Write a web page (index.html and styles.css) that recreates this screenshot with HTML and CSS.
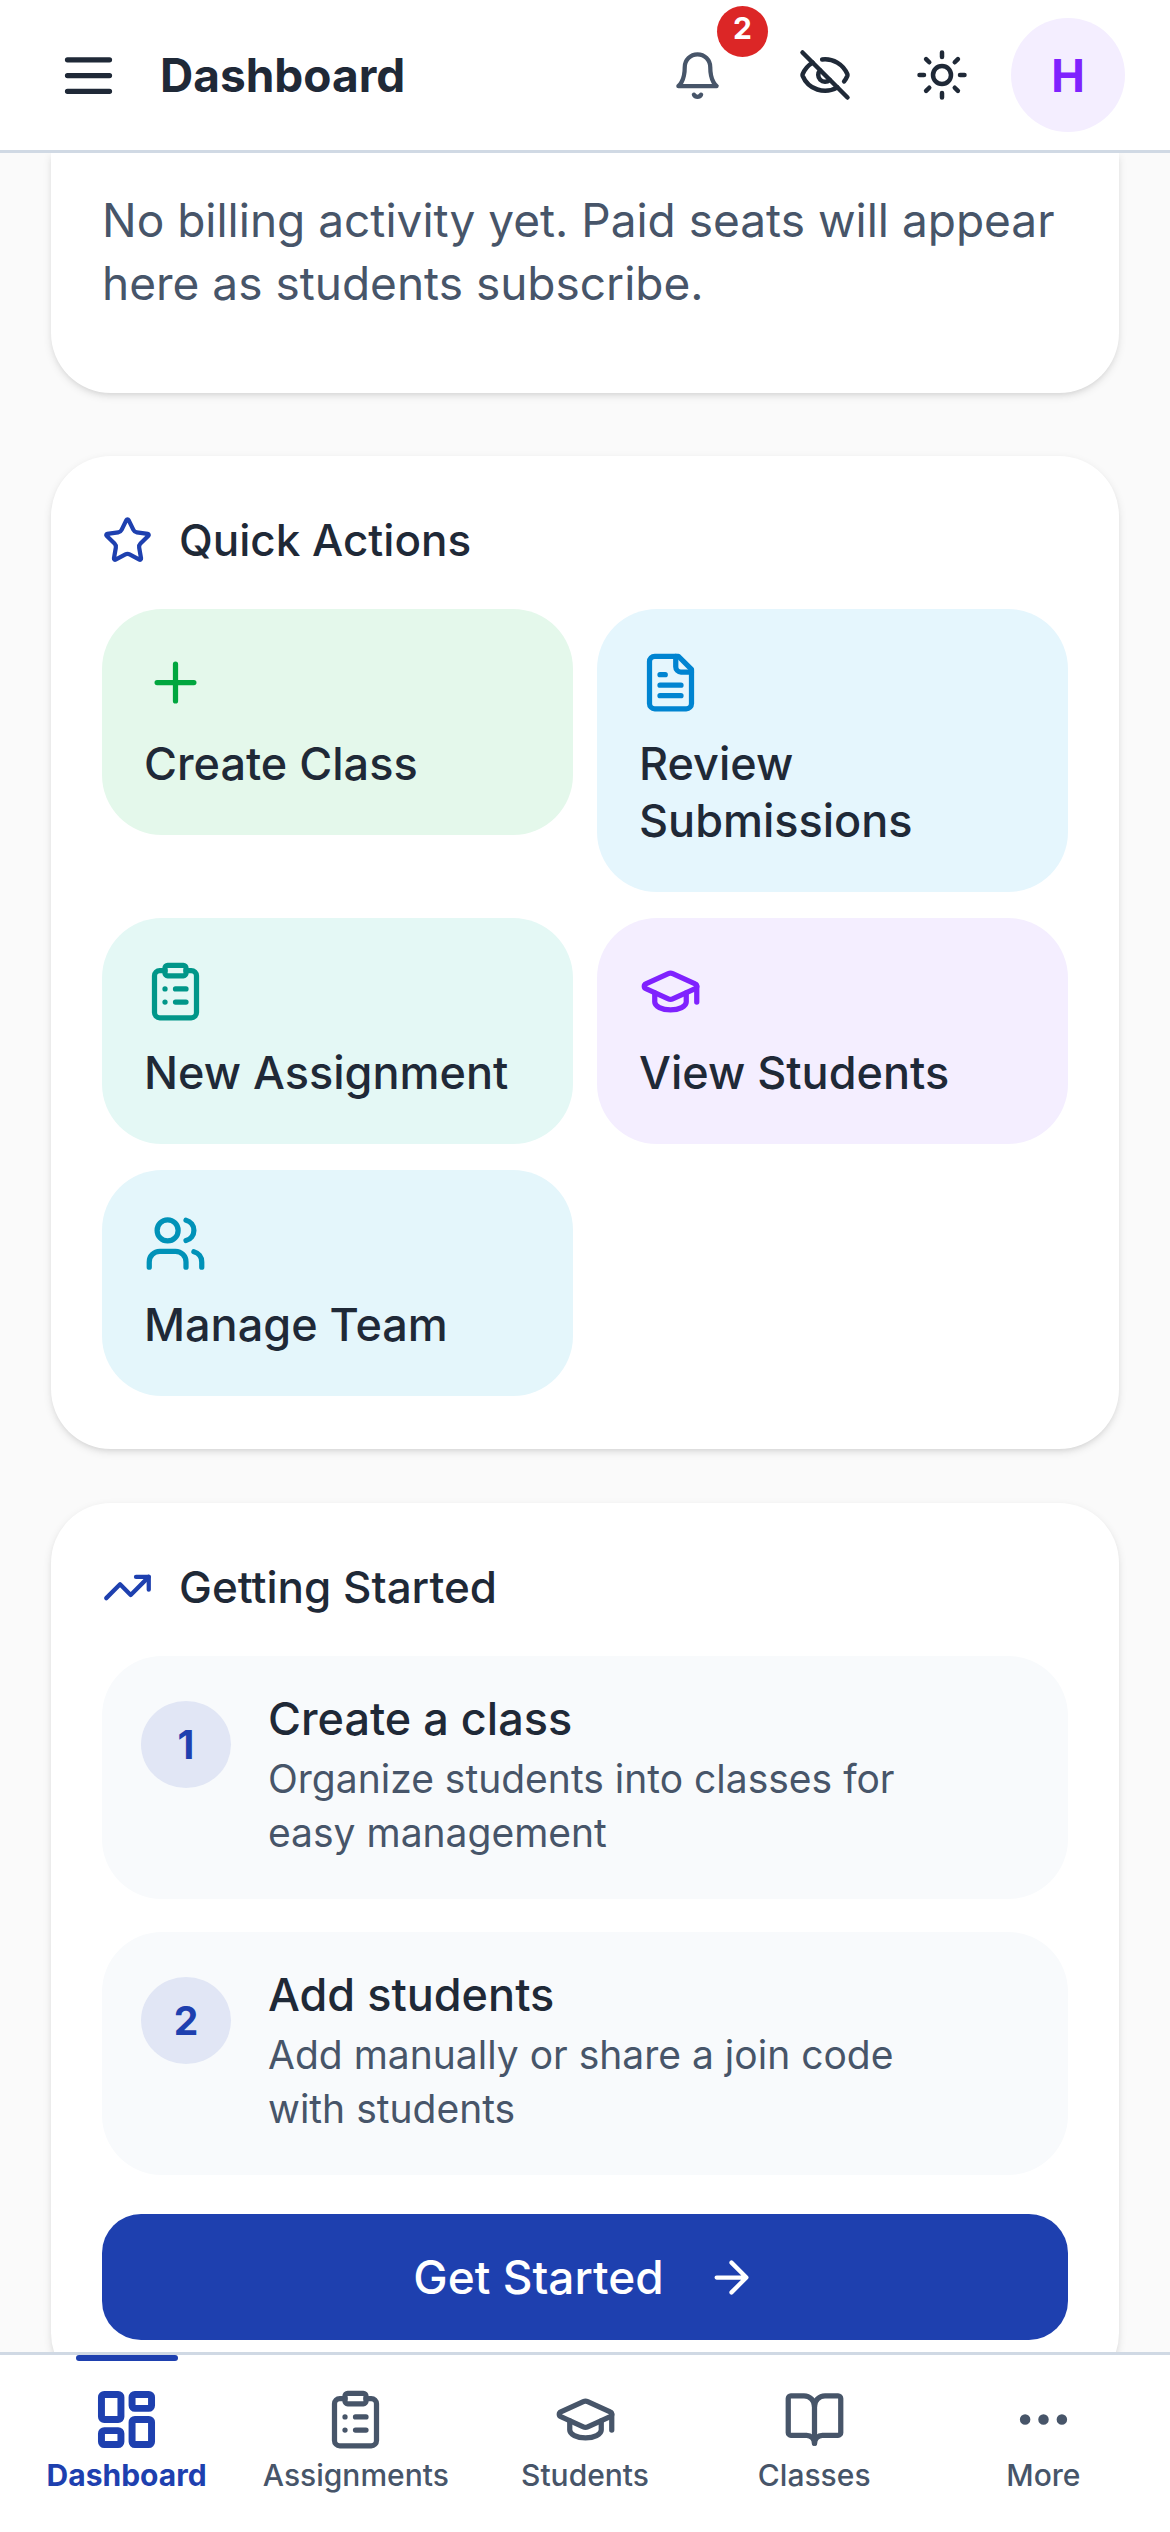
FILE: index.html
```html
<!DOCTYPE html>
<html lang="en">
<head>
<meta charset="utf-8">
<meta name="viewport" content="width=device-width, initial-scale=1">
<title>Dashboard</title>
<link rel="stylesheet" href="styles.css">
</head>
<body>
<svg class="sprite" aria-hidden="true">
  <symbol id="clipboard-list" viewBox="0 0 24 24"><rect width="8" height="4" x="8" y="2" rx="1"/><path d="M16 4h2a2 2 0 0 1 2 2v14a2 2 0 0 1-2 2H6a2 2 0 0 1-2-2V6a2 2 0 0 1 2-2h2"/><path d="M12 11h4M12 16h4M8 11h.01M8 16h.01"/></symbol>
  <symbol id="graduation-cap" viewBox="0 0 24 24"><path d="M21.42 10.922a1 1 0 0 0-.019-1.838L12.83 5.18a2 2 0 0 0-1.66 0L2.6 9.08a1 1 0 0 0 0 1.832l8.57 3.908a2 2 0 0 0 1.66 0z"/><path d="M22 10v6"/><path d="M6 12.5V16a6 3 0 0 0 12 0v-3.5"/></symbol>
</svg>

<header class="topbar">
  <button class="menu-button" type="button" aria-label="Open menu">
    <svg class="icon icon-lg" viewBox="0 0 24 24"><path d="M4 6h16M4 12h16M4 18h16"/></svg>
  </button>
  <h1 class="page-title">Dashboard</h1>
  <div class="topbar-actions">
    <button class="tool tool-bell" type="button" aria-label="Notifications, 2 unread">
      <svg class="icon icon-sm" viewBox="0 0 24 24"><path d="M6 8a6 6 0 0 1 12 0c0 7 3 9 3 9H3s3-2 3-9"/><path d="M10.3 21a1.94 1.94 0 0 0 3.4 0"/></svg>
      <span class="count">2</span>
    </button>
    <button class="tool" type="button" aria-label="Hide values">
      <svg class="icon icon-md" viewBox="0 0 24 24"><path d="M10.733 5.076a10.744 10.744 0 0 1 11.205 6.575 1 1 0 0 1 0 .696 10.747 10.747 0 0 1-1.444 2.49"/><path d="M14.084 14.158a3 3 0 0 1-4.242-4.242"/><path d="M17.479 17.499a10.75 10.75 0 0 1-15.417-5.151 1 1 0 0 1 0-.696 10.75 10.75 0 0 1 4.446-5.143"/><path d="m2 2 20 20"/></svg>
    </button>
    <button class="tool" type="button" aria-label="Toggle theme">
      <svg class="icon icon-md" viewBox="0 0 24 24"><circle cx="12" cy="12" r="4"/><path d="M12 2v2M12 20v2M4.93 4.93l1.41 1.41M17.66 17.66l1.41 1.41M2 12h2M20 12h2M6.34 17.66l-1.41 1.41M19.07 4.93l-1.41 1.41"/></svg>
    </button>
    <button class="avatar" type="button" aria-label="Account">H</button>
  </div>
</header>

<main class="content">
  <section class="card card-billing">
    <p class="empty-note">No billing activity yet. Paid seats will appear here as students subscribe.</p>
  </section>

  <section class="card">
    <h2 class="card-title">
      <svg class="icon icon-sm" viewBox="0 0 24 24"><path d="M11.525 2.295a.53.53 0 0 1 .95 0l2.31 4.679a2.123 2.123 0 0 0 1.595 1.16l5.166.756a.53.53 0 0 1 .294.904l-3.736 3.638a2.123 2.123 0 0 0-.611 1.878l.882 5.14a.53.53 0 0 1-.771.56l-4.618-2.428a2.122 2.122 0 0 0-1.973 0L6.396 21.01a.53.53 0 0 1-.77-.56l.881-5.139a2.122 2.122 0 0 0-.611-1.879L2.16 9.795a.53.53 0 0 1 .294-.906l5.165-.755a2.122 2.122 0 0 0 1.597-1.16z"/></svg>
      Quick Actions
    </h2>
    <div class="tiles">
      <a class="tile tile-green" href="#create-class">
        <svg class="icon icon-lg" viewBox="0 0 24 24"><path d="M5 12h14M12 5v14"/></svg>
        <span>Create Class</span>
      </a>
      <a class="tile tile-sky" href="#review">
        <svg class="icon icon-lg" viewBox="0 0 24 24"><path d="M15 2H6a2 2 0 0 0-2 2v16a2 2 0 0 0 2 2h12a2 2 0 0 0 2-2V7z"/><path d="M14 2v4a2 2 0 0 0 2 2h4"/><path d="M10 9H8M16 13H8M16 17H8"/></svg>
        <span>Review Submissions</span>
      </a>
      <a class="tile tile-teal" href="#new-assignment">
        <svg class="icon icon-lg"><use href="#clipboard-list"/></svg>
        <span>New Assignment</span>
      </a>
      <a class="tile tile-violet" href="#students">
        <svg class="icon icon-lg"><use href="#graduation-cap"/></svg>
        <span>View Students</span>
      </a>
      <a class="tile tile-cyan" href="#team">
        <svg class="icon icon-lg" viewBox="0 0 24 24"><path d="M16 21v-2a4 4 0 0 0-4-4H6a4 4 0 0 0-4 4v2"/><circle cx="9" cy="7" r="4"/><path d="M22 21v-2a4 4 0 0 0-3-3.87"/><path d="M16 3.13a4 4 0 0 1 0 7.75"/></svg>
        <span>Manage Team</span>
      </a>
    </div>
  </section>

  <section class="card">
    <h2 class="card-title">
      <svg class="icon icon-sm" viewBox="0 0 24 24"><path d="M16 7h6v6"/><path d="m22 7-8.500 8.500-5-5L2 17"/></svg>
      Getting Started
    </h2>
    <ol class="steps">
      <li class="step">
        <span class="step-number">1</span>
        <div class="step-body">
          <h3 class="step-title">Create a class</h3>
          <p class="step-text">Organize students into classes for easy management</p>
        </div>
      </li>
      <li class="step">
        <span class="step-number">2</span>
        <div class="step-body">
          <h3 class="step-title">Add students</h3>
          <p class="step-text">Add manually or share a join code with students</p>
        </div>
      </li>
    </ol>
    <button class="primary" type="button">
      Get Started
      <svg class="icon icon-sm" viewBox="0 0 24 24"><path d="M5 12h14M12 5l7 7-7 7"/></svg>
    </button>
  </section>
</main>

<nav class="tabbar" aria-label="Main">
  <a class="tab tab-active" href="#dashboard" aria-current="page">
    <svg class="icon icon-lg" viewBox="0 0 24 24"><rect width="7" height="9" x="3" y="3" rx="1"/><rect width="7" height="5" x="14" y="3" rx="1"/><rect width="7" height="9" x="14" y="12" rx="1"/><rect width="7" height="5" x="3" y="16" rx="1"/></svg>
    <span>Dashboard</span>
  </a>
  <a class="tab" href="#assignments">
    <svg class="icon icon-lg"><use href="#clipboard-list"/></svg>
    <span>Assignments</span>
  </a>
  <a class="tab" href="#students">
    <svg class="icon icon-lg"><use href="#graduation-cap"/></svg>
    <span>Students</span>
  </a>
  <a class="tab" href="#classes">
    <svg class="icon icon-lg" viewBox="0 0 24 24"><path d="M12 7v14"/><path d="M3 18a1 1 0 0 1-1-1V4a1 1 0 0 1 1-1h5a4 4 0 0 1 4 4 4 4 0 0 1 4-4h5a1 1 0 0 1 1 1v13a1 1 0 0 1-1 1h-6a3 3 0 0 0-3 3 3 3 0 0 0-3-3z"/></svg>
    <span>Classes</span>
  </a>
  <a class="tab" href="#more">
    <svg class="icon icon-lg" viewBox="0 0 24 24"><circle cx="12" cy="12" r="1"/><circle cx="19" cy="12" r="1"/><circle cx="5" cy="12" r="1"/></svg>
    <span>More</span>
  </a>
</nav>
</body>
</html>
```
FILE: styles.css
```css
:root {
  --ink: #1f2937;
  --muted: #475569;
  --primary: #1e40af;
  --line: #d0d9e4;
}

* { box-sizing: border-box; }

body {
  margin: 0;
  height: 100vh;
  display: flex;
  flex-direction: column;
  background: #fafafa;
  color: var(--ink);
  font-family: Inter, "Noto Sans", sans-serif;
}

h1, h2, h3, p, ol { margin: 0; padding: 0; }
a { color: inherit; text-decoration: none; }
button { border: 0; padding: 0; background: none; color: inherit; font: inherit; cursor: pointer; }

.sprite { display: none; }

.icon {
  display: block;
  flex: none;
  fill: none;
  stroke: currentColor;
  stroke-width: 2;
  stroke-linecap: round;
  stroke-linejoin: round;
}
.icon-sm { width: 51px; height: 51px; }
.icon-md { width: 54px; height: 54px; }
.icon-lg { width: 63px; height: 63px; }

/* Top bar */
.topbar {
  flex: none;
  display: flex;
  align-items: center;
  padding: 18px 45px 18px 57px;
  background: #fff;
  border-bottom: 3px solid var(--line);
}
.page-title {
  margin-left: 40px;
  font-size: 46px;
  line-height: 60px;
  font-weight: 700;
}
.topbar-actions {
  margin-left: auto;
  display: flex;
  gap: 21px;
}
.tool {
  position: relative;
  width: 96px;
  height: 114px;
  display: flex;
  align-items: center;
  justify-content: center;
}
.tool-bell { width: 117px; color: var(--muted); }
.count {
  position: absolute;
  top: -12px;
  right: -12px;
  width: 51px;
  height: 51px;
  border-radius: 50%;
  background: #dc2626;
  color: #fff;
  font-size: 30px;
  line-height: 45px;
  font-weight: 700;
  text-align: center;
}
.avatar {
  width: 114px;
  height: 114px;
  border-radius: 50%;
  background: #f4eeff;
  color: #7f22fe;
  font-size: 45px;
  font-weight: 700;
}

/* Cards */
.content {
  flex: 1;
  min-height: 0;
  overflow: hidden;
  padding: 0 51px;
}
.card {
  margin-bottom: 54px;
  padding: 51px 51px 53px;
  border-radius: 60px;
  background: #fff;
  box-shadow: 0 3px 9px rgba(0, 0, 0, 0.1), 0 3px 6px -3px rgba(0, 0, 0, 0.1);
}
.card-billing {
  margin-bottom: 63px;
  padding: 36px 51px 78px;
  border-radius: 0 0 60px 60px;
}
.empty-note {
  color: var(--muted);
  font-size: 46px;
  line-height: 63px;
}
.card-title {
  display: flex;
  align-items: center;
  gap: 26px;
  margin-bottom: 36px;
  font-size: 44px;
  line-height: 66px;
  font-weight: 500;
}
.card-title .icon { color: var(--primary); }

/* Quick action tiles */
.tiles {
  display: grid;
  grid-template-columns: 1fr 1fr;
  align-items: start;
  gap: 26px 24px;
}
.tile {
  display: flex;
  flex-direction: column;
  gap: 21px;
  padding: 42px 42px 43px;
  border-radius: 60px;
  font-size: 45px;
  line-height: 57px;
  font-weight: 500;
}
.tile-green { background: #e4f8eb; }
.tile-green .icon { color: #00a63e; }
.tile-sky { background: #e5f6fd; }
.tile-sky .icon { color: #0084d1; }
.tile-teal { background: #e4f8f5; }
.tile-teal .icon { color: #009689; }
.tile-violet { background: #f4eeff; }
.tile-violet .icon { color: #7f22fe; }
.tile-cyan { background: #e4f6fb; }
.tile-cyan .icon { color: #0092b8; }

/* Getting started */
.steps {
  display: grid;
  gap: 33px;
  margin-bottom: 39px;
  list-style: none;
}
.step {
  display: flex;
  gap: 37px;
  padding: 36px 90px 39px 39px;
  border-radius: 60px;
  background: #f8fafc;
}
.step-number {
  flex: none;
  width: 90px;
  height: 87px;
  margin-top: 9px;
  border-radius: 50%;
  background: #e1e6f5;
  color: var(--primary);
  font-size: 39px;
  line-height: 87px;
  font-weight: 700;
  text-align: center;
}
.step-title {
  margin-bottom: 6px;
  font-size: 45px;
  line-height: 54px;
  font-weight: 500;
}
.step-text {
  color: var(--muted);
  font-size: 39px;
  line-height: 54px;
}
.primary {
  display: flex;
  align-items: center;
  justify-content: center;
  gap: 42px;
  width: 100%;
  height: 126px;
  border-radius: 39px;
  background: var(--primary);
  color: #fff;
  font-size: 46px;
  font-weight: 500;
}

/* Bottom tabs */
.tabbar {
  flex: none;
  display: flex;
  padding: 0 12px;
  background: #fff;
  border-top: 3px solid var(--line);
}
.tab {
  position: relative;
  flex: 1;
  display: flex;
  flex-direction: column;
  align-items: center;
  gap: 6px;
  padding: 33px 0 39px;
  color: var(--muted);
  font-size: 30px;
  line-height: 36px;
  font-weight: 500;
}
.tab-active { color: var(--primary); font-weight: 700; }
.tab-active .icon { stroke-width: 2.5; transform: scale(1.06); }
.tab-active::before {
  content: "";
  position: absolute;
  top: 0;
  left: 50%;
  width: 102px;
  height: 6px;
  margin-left: -51px;
  border-radius: 3px;
  background: var(--primary);
}
```
